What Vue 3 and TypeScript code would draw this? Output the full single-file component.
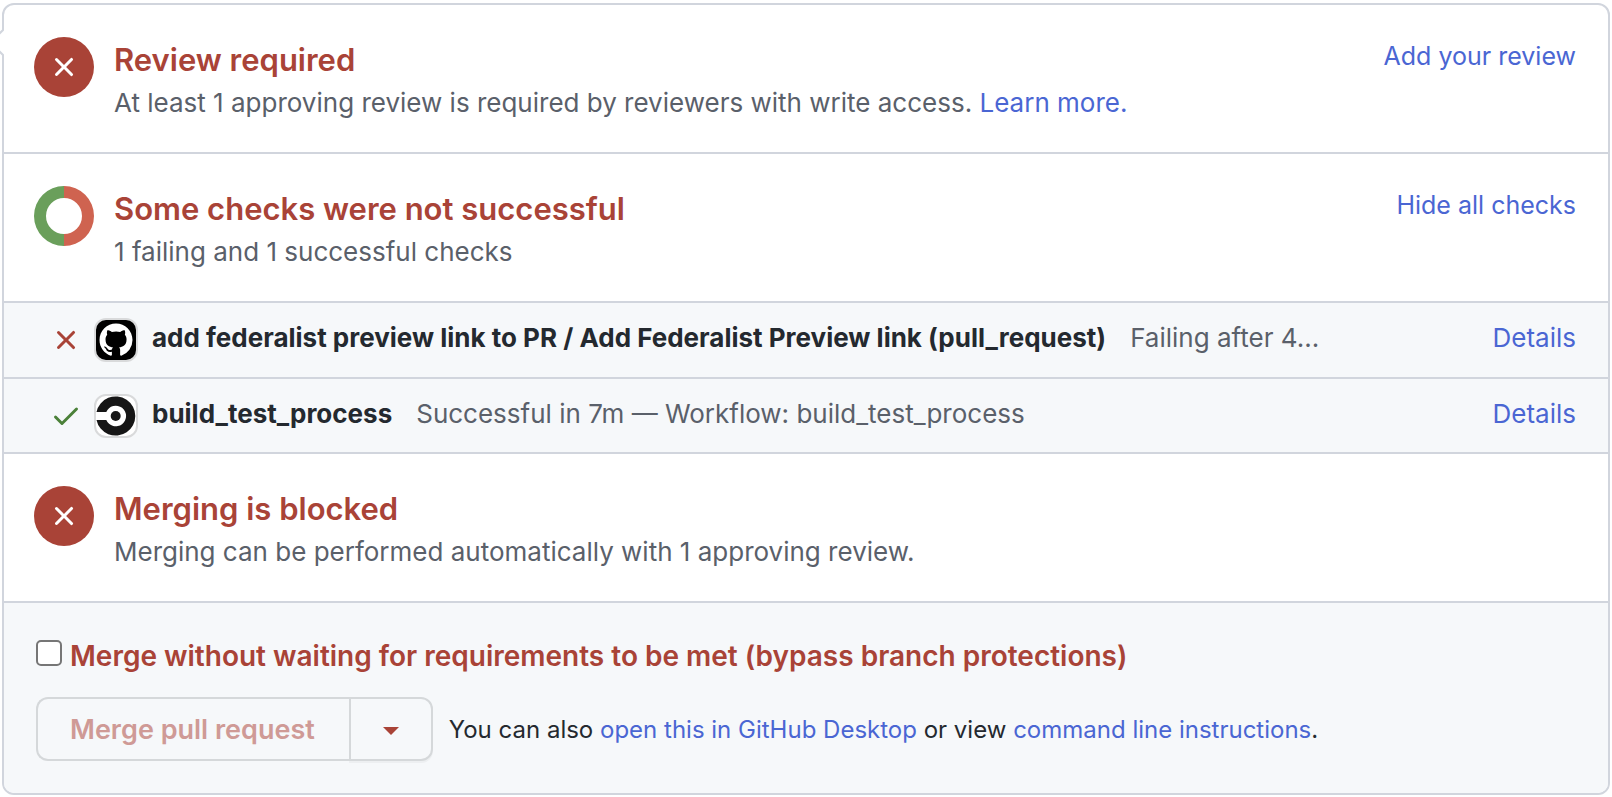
<script setup lang="ts">
interface Check {
  name: string
  summary: string
  passed: boolean
  app: 'github' | 'circleci'
}

const checks: Check[] = [
  {
    name: 'add federalist preview link to PR / Add Federalist Preview link (pull_request)',
    summary: 'Failing after 4...',
    passed: false,
    app: 'github',
  },
  {
    name: 'build_test_process',
    summary: 'Successful in 7m — Workflow: build_test_process',
    passed: true,
    app: 'circleci',
  },
]
</script>

<template>
  <main class="merge-box">
    <svg class="caret" width="6" height="31" viewBox="0 0 6 31" aria-hidden="true">
      <path class="caret-fill" d="M4 2.5L-8 14.5V16.5L4 28.5Z" />
      <path class="caret-line" d="M3 0V3L-10 16M3 31V28L-10 15" />
    </svg>

    <section class="status">
      <span class="badge">
        <svg width="32" height="32" viewBox="0 0 16 16" aria-hidden="true">
          <path d="M3.72 3.72a.75.75 0 0 1 1.06 0L8 6.94l3.22-3.22a.75.75 0 1 1 1.06 1.06L9.06 8l3.22 3.22a.75.75 0 1 1-1.06 1.06L8 9.06l-3.22 3.22a.75.75 0 0 1-1.06-1.06L6.94 8 3.72 4.78a.75.75 0 0 1 0-1.06z" />
        </svg>
      </span>
      <div class="status-body">
        <h2>Review required</h2>
        <p>At least 1 approving review is required by reviewers with write access. <a href="#">Learn more.</a></p>
      </div>
      <a class="action" href="#">Add your review</a>
    </section>

    <section class="status">
      <svg class="donut" width="60" height="60" viewBox="0 0 60 60" aria-hidden="true">
        <path class="donut-fail" d="M30 0a30 30 0 0 1 0 60V48a18 18 0 0 0 0-36z" />
        <path class="donut-pass" d="M30 0a30 30 0 0 0 0 60V48a18 18 0 0 1 0-36z" />
      </svg>
      <div class="status-body">
        <h2>Some checks were not successful</h2>
        <p>1 failing and 1 successful checks</p>
      </div>
      <button class="action" type="button">Hide all checks</button>
    </section>

    <ul class="checks">
      <li v-for="check in checks" :key="check.name">
        <svg v-if="check.passed" class="mark pass" width="32" height="32" viewBox="0 0 16 16" aria-hidden="true">
          <path d="M13.78 3.97a.75.75 0 0 1 0 1.06l-7.25 7.25a.75.75 0 0 1-1.06 0L2.22 9.03a.75.75 0 0 1 1.06-1.06L6 10.69l6.72-6.72a.75.75 0 0 1 1.06 0z" />
        </svg>
        <svg v-else class="mark fail" width="32" height="32" viewBox="0 0 16 16" aria-hidden="true">
          <path d="M3.72 3.72a.75.75 0 0 1 1.06 0L8 6.94l3.22-3.22a.75.75 0 1 1 1.06 1.06L9.06 8l3.22 3.22a.75.75 0 1 1-1.06 1.06L8 9.06l-3.22 3.22a.75.75 0 0 1-1.06-1.06L6.94 8 3.72 4.78a.75.75 0 0 1 0-1.06z" />
        </svg>
        <svg v-if="check.app === 'github'" class="avatar" width="44" height="44" viewBox="0 0 44 44" aria-hidden="true">
          <rect x="1" y="1" width="42" height="42" rx="11" fill="#000" stroke="#d9dadb" stroke-width="2" />
          <path transform="translate(5.5 5.5) scale(2.0625)" fill="#fff" d="M8 0C3.58 0 0 3.58 0 8c0 3.54 2.29 6.53 5.47 7.59.4.07.55-.17.55-.38 0-.19-.01-.82-.01-1.49-2.01.37-2.53-.49-2.69-.94-.09-.23-.48-.94-.82-1.13-.28-.15-.68-.52-.01-.53.63-.01 1.08.58 1.23.82.72 1.21 1.87.87 2.33.66.07-.52.28-.87.51-1.07-1.78-.2-3.64-.89-3.64-3.95 0-.87.31-1.59.82-2.15-.08-.2-.36-1.02.08-2.12 0 0 .67-.21 2.2.82.64-.18 1.32-.27 2-.27s1.36.09 2 .27c1.53-1.04 2.2-.82 2.2-.82.44 1.1.16 1.92.08 2.12.51.56.82 1.27.82 2.15 0 3.07-1.87 3.75-3.65 3.95.29.25.54.73.54 1.48 0 1.07-.01 1.93-.01 2.2 0 .21.15.46.55.38A8.01 8.01 0 0 0 16 8c0-4.42-3.58-8-8-8z" />
        </svg>
        <svg v-else class="avatar" width="44" height="44" viewBox="0 0 44 44" aria-hidden="true">
          <rect x="1" y="1" width="42" height="42" rx="11" fill="#fff" stroke="#d9dadb" stroke-width="2" />
          <path fill="#161616" d="M2.5 18A19.6 19.6 0 1 1 2.5 26H12.3A10.3 10.3 0 1 0 12.3 18z" />
          <circle cx="21.7" cy="22" r="5" fill="#161616" />
        </svg>
        <div class="check-text">
          <strong>{{ check.name }}</strong>
          <span>{{ check.summary }}</span>
        </div>
        <a class="details" href="#">Details</a>
      </li>
    </ul>

    <section class="status">
      <span class="badge">
        <svg width="32" height="32" viewBox="0 0 16 16" aria-hidden="true">
          <path d="M3.72 3.72a.75.75 0 0 1 1.06 0L8 6.94l3.22-3.22a.75.75 0 1 1 1.06 1.06L9.06 8l3.22 3.22a.75.75 0 1 1-1.06 1.06L8 9.06l-3.22 3.22a.75.75 0 0 1-1.06-1.06L6.94 8 3.72 4.78a.75.75 0 0 1 0-1.06z" />
        </svg>
      </span>
      <div class="status-body">
        <h2>Merging is blocked</h2>
        <p>Merging can be performed automatically with 1 approving review.</p>
      </div>
    </section>

    <footer class="merge-actions">
      <div class="bypass">
        <input id="bypass" type="checkbox" />
        <label for="bypass">Merge without waiting for requirements to be met (bypass branch protections)</label>
      </div>
      <div class="merge-row">
        <div class="button-group">
          <button class="merge" type="button" disabled>Merge pull request</button>
          <button class="options" type="button" aria-label="Select merge method">
            <svg width="16" height="8" viewBox="0 0 16 8" aria-hidden="true"><path d="M0 0H16L8 8z" /></svg>
          </button>
        </div>
        <p>You can also <a href="#">open this in GitHub Desktop</a> or view <a href="#">command line instructions</a>.</p>
      </div>
    </footer>
  </main>
</template>

<style>
body {
  background: #fff;
}
</style>

<style scoped>
* {
  box-sizing: border-box;
}

.merge-box {
  position: relative;
  margin: 3px 2px 2px;
  border: 2px solid #d1d5dd;
  border-radius: 12px;
  background: #fff;
  color: #24292f;
  font-family: Inter, "Liberation Sans", sans-serif;
  font-size: 26px;
  line-height: 36px;
}

.caret {
  position: absolute;
  left: -4px;
  top: 22px;
}

.caret-fill {
  fill: #fff;
}

.caret-line {
  fill: none;
  stroke: #d1d5dd;
  stroke-width: 2;
}

a,
.action {
  color: #4a66d3;
  text-decoration: none;
}

h2,
p,
ul {
  margin: 0;
  padding: 0;
}

.status {
  display: flex;
  gap: 20px;
  padding: 32px 32px 29px 30px;
  border-bottom: 2px solid #d1d5dd;
}

.badge {
  display: flex;
  flex: none;
  align-items: center;
  justify-content: center;
  width: 60px;
  height: 60px;
  border-radius: 50%;
  background: #a94337;
  fill: #fff;
}

.donut {
  flex: none;
}

.donut-fail {
  fill: #cf6350;
}

.donut-pass {
  fill: #6a9f5b;
}

.status-body {
  flex: 1;
  min-width: 0;
}

h2 {
  color: #a94337;
  font-size: 31px;
  font-weight: 600;
  line-height: 46px;
}

.status-body p {
  color: #5a606a;
  line-height: 40px;
}

.action {
  align-self: flex-start;
  padding: 0;
  border: 0;
  background: none;
  font: inherit;
  font-size: 25px;
  line-height: 38px;
  white-space: nowrap;
}

.checks {
  list-style: none;
  background: #f6f8fa;
}

.checks li {
  display: flex;
  align-items: center;
  padding: 15px 32px 15px 46px;
  border-bottom: 2px solid #d1d5dd;
}

.checks li:last-child {
  padding-bottom: 14px;
}

.mark {
  flex: none;
  margin-right: 12px;
}

.pass {
  fill: #4b8139;
}

.fail {
  fill: #a94337;
}

.avatar {
  flex: none;
  margin-right: 14px;
}

.check-text {
  display: flex;
  flex: 1;
  gap: 24px;
  min-width: 0;
  padding-bottom: 4px;
  white-space: nowrap;
}

.check-text strong {
  font-weight: 700;
}

.check-text span {
  color: #5a606a;
}

.details {
  padding-bottom: 4px;
}

.merge-actions {
  padding: 32px;
  border-radius: 0 0 10px 10px;
  background: #f6f8fa;
}

.bypass {
  display: flex;
  gap: 8px;
  color: #a94337;
  font-size: 28px;
  font-weight: 600;
  line-height: 42px;
}

.bypass input {
  flex: none;
  width: 26px;
  height: 26px;
  margin: 5px 0 0;
  border: 2px solid #767676;
  border-radius: 5px;
  background: #fff;
  appearance: none;
}

.bypass input:checked {
  background: #4a66d3;
}

.merge-row {
  display: flex;
  align-items: center;
  gap: 16px;
  margin-top: 20px;
  font-size: 24px;
}

.merge-row p {
  padding-top: 2px;
}

.button-group {
  display: flex;
}

.button-group button {
  height: 64px;
  border: 2px solid #d5d8da;
  background: #f6f8fa;
  color: #a94337;
  font: inherit;
}

.button-group .merge {
  padding: 2px 34px 0 32px;
  border-right: 0;
  border-radius: 12px 0 0 12px;
  color: #cf9a96;
  font-size: 27px;
  font-weight: 600;
}

.button-group .options {
  display: flex;
  align-items: center;
  justify-content: center;
  width: 84px;
  padding-top: 4px;
  border-radius: 0 12px 12px 0;
  box-shadow: 0 2px 0 rgba(27, 31, 36, 0.04);
  fill: #a94337;
}
</style>
